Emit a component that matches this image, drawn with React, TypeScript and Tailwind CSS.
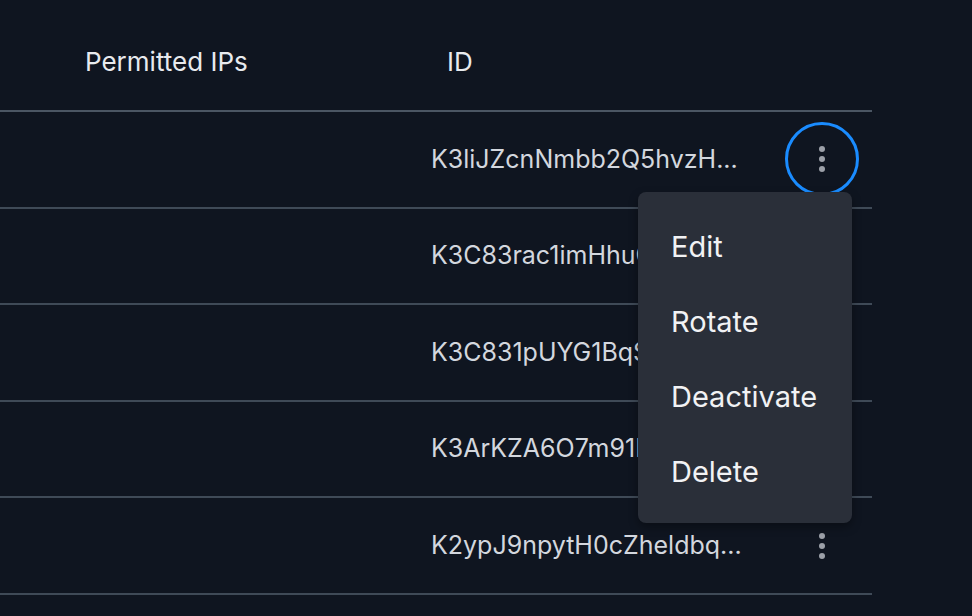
const rows = [
  "K3liJZcnNmbb2Q5hvzH...",
  "K3C83rac1imHhuGx7Yb...",
  "K3C831pUYG1BqSd4Lk...",
  "K3ArKZA6O7m91IpQeR...",
  "K2ypJ9npytH0cZheldbq...",
];

function Kebab({ active }: { active?: boolean }) {
  return (
    <div
      className={
        "w-[74px] h-[74px] rounded-full flex flex-col items-center justify-center gap-[4px] " +
        (active ? "border-[3px] border-[#1a8cff]" : "border-[3px] border-transparent")
      }
    >
      <span className="w-[6px] h-[6px] rounded-full bg-[#9ca0a8]" />
      <span className="w-[6px] h-[6px] rounded-full bg-[#9ca0a8]" />
      <span className="w-[6px] h-[6px] rounded-full bg-[#9ca0a8]" />
    </div>
  );
}

export default function App() {
  return (
    <div
      className="relative w-[972px] h-[616px] overflow-hidden bg-[#0f1520] text-[#d3d7de]"
      style={{ fontFamily: "Inter, 'Noto Sans', sans-serif" }}
    >
      <div className="w-[872px]">
        {/* header */}
        <div className="h-[112px] flex items-center pt-[12px] border-b-2 border-[#4b5663] text-[26px] text-[#e8eaee]">
          <div className="w-[85px]" />
          <div className="w-[362px]">Permitted IPs</div>
          <div>ID</div>
        </div>

        {rows.map((id, i) => (
          <div
            key={id}
            className="h-[96.6px] flex items-center border-b-2 border-[#3f4a57] text-[25px]"
          >
            <div className="w-[85px]" />
            <div className="w-[346px]" />
            <div className="w-[354px] whitespace-nowrap">{id}</div>
            <Kebab active={i === 0} />
          </div>
        ))}
      </div>

      {/* dropdown menu, sits over rows 2-4 */}
      <div className="absolute left-[638px] top-[192px] w-[214px] h-[331px] rounded-[8px] bg-[#2a2f39] shadow-[0_4px_10px_rgba(0,0,0,0.35)] py-[17px] text-[29px] text-[#f1f2f4]">
        {["Edit", "Rotate", "Deactivate", "Delete"].map((label) => (
          <div key={label} className="h-[75px] flex items-center px-[33px]">
            {label}
          </div>
        ))}
      </div>
    </div>
  );
}
